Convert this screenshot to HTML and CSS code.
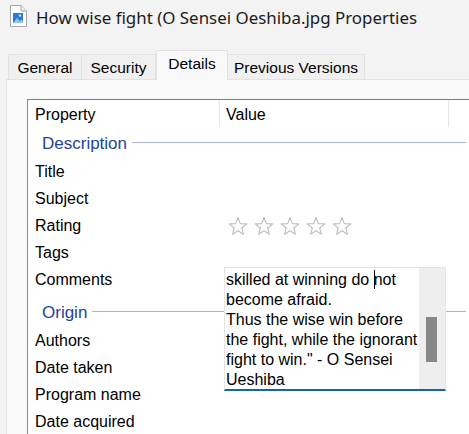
FILE: index.html
```html
<!DOCTYPE html>
<html>
<head>
<meta charset="utf-8">
<link rel="stylesheet" href="styles.css">
</head>
<body>
<div class="window">
  <div class="titlebar">
    <svg class="file-icon" width="18" height="22" viewBox="0 0 18 22">
      <path d="M1.5 0.5 H12 L17.5 6 V21.5 H1.5 Z" fill="#fff" stroke="#a3a8b0"/>
      <path d="M12 0.5 V6 H17.5" fill="#eef0f3" stroke="#a3a8b0"/>
      <rect x="4" y="8" width="10" height="10" fill="#2a79d6"/>
      <path d="M4 18 L8 13 L11 16 L12.5 14.5 L14 16 V18 Z" fill="#8cc3f5"/>
      <circle cx="11" cy="10.5" r="1.2" fill="#cfe6fb"/>
    </svg>
    <span class="title">How wise fight (O Sensei Oeshiba.jpg Properties</span>
  </div>
  <div class="tabs">
    <div class="tab tab-general">General</div>
    <div class="tab tab-security">Security</div>
    <div class="tab tab-details active">Details</div>
    <div class="tab tab-prev">Previous Versions</div>
  </div>
  <div class="panel">
    <div class="list">
      <div class="header">
        <div class="hcell col-prop">Property</div>
        <div class="hcell col-val">Value</div>
      </div>
      <div class="group"><span class="group-name">Description</span><span class="rule"></span></div>
      <div class="row"><span class="label">Title</span></div>
      <div class="row"><span class="label">Subject</span></div>
      <div class="row"><span class="label">Rating</span>
        <span class="stars">
          <svg viewBox="0 0 20 20" class="star"><path d="M10 1.5 L12.3 7.6 L18.8 7.9 L13.7 12 L15.4 18.3 L10 14.7 L4.6 18.3 L6.3 12 L1.2 7.9 L7.7 7.6 Z"/></svg>
          <svg viewBox="0 0 20 20" class="star"><path d="M10 1.5 L12.3 7.6 L18.8 7.9 L13.7 12 L15.4 18.3 L10 14.7 L4.6 18.3 L6.3 12 L1.2 7.9 L7.7 7.6 Z"/></svg>
          <svg viewBox="0 0 20 20" class="star"><path d="M10 1.5 L12.3 7.6 L18.8 7.9 L13.7 12 L15.4 18.3 L10 14.7 L4.6 18.3 L6.3 12 L1.2 7.9 L7.7 7.6 Z"/></svg>
          <svg viewBox="0 0 20 20" class="star"><path d="M10 1.5 L12.3 7.6 L18.8 7.9 L13.7 12 L15.4 18.3 L10 14.7 L4.6 18.3 L6.3 12 L1.2 7.9 L7.7 7.6 Z"/></svg>
          <svg viewBox="0 0 20 20" class="star"><path d="M10 1.5 L12.3 7.6 L18.8 7.9 L13.7 12 L15.4 18.3 L10 14.7 L4.6 18.3 L6.3 12 L1.2 7.9 L7.7 7.6 Z"/></svg>
        </span>
      </div>
      <div class="row"><span class="label">Tags</span></div>
      <div class="row"><span class="label">Comments</span></div>
      <div class="group group-origin"><span class="group-name">Origin</span><span class="rule"></span></div>
      <div class="row"><span class="label">Authors</span></div>
      <div class="row"><span class="label">Date taken</span></div>
      <div class="row"><span class="label">Program name</span></div>
      <div class="row"><span class="label">Date acquired</span></div>

      <div class="editbox">
        <div class="edit-text">skilled at winning do <span class="caret"></span>not<br>become afraid.<br>Thus the wise win before<br>the fight, while the ignorant<br>fight to win." - O Sensei<br>Ueshiba</div>
        <div class="scrollbar"><div class="thumb"></div></div>
      </div>
    </div>
  </div>
</div>
</body>
</html>
```

FILE: styles.css
```css
html, body {
  margin: 0;
  padding: 0;
}
body {
  width: 469px;
  height: 434px;
  overflow: hidden;
  background: #f3f3f3;
  font-family: "Liberation Sans", Arial, sans-serif;
  color: #000;
}
.window {
  display: flex;
  flex-direction: column;
  height: 434px;
}
.titlebar {
  flex: none;
  height: 34px;
  display: flex;
  align-items: center;
  padding-left: 9px;
  gap: 9px;
}
.file-icon {
  flex: none;
  margin-top: -2px;
}
.title {
  font-family: "Noto Sans", "Open Sans", sans-serif;
  font-size: 16.9px;
  color: #1b1b1b;
  white-space: nowrap;
}
.tabs {
  flex: none;
  display: flex;
  align-items: flex-end;
  padding-top: 16px;
  padding-left: 8px;
  height: 29px;
  position: relative;
  z-index: 1;
}
.tab {
  box-sizing: border-box;
  height: 25px;
  background: #f0f0f0;
  border: 1px solid #e2e2e2;
  border-bottom: none;
  font-size: 15.5px;
  display: flex;
  align-items: center;
  justify-content: center;
  padding-top: 1px;
  white-space: nowrap;
}
.tab + .tab {
  border-left: none;
}
.tab-general { width: 74px; }
.tab-security { width: 74px; }
.tab-details { width: 72px; }
.tab-prev { width: 137px; }
.tab.active {
  height: 30px;
  margin-bottom: -1px;
  background: #f9f9f9;
  border-left: 1px solid #e2e2e2;
  padding-bottom: 4px;
}
.tab.active + .tab {
  border-left: none;
}
.panel {
  flex: 1;
  min-height: 0;
  overflow: hidden;
  margin-left: 6px;
  background: #f9f9f9;
  border-top: 1px solid #e2e2e2;
  border-left: 1px solid #e6e6e6;
  padding: 19px 0 0 20px;
  display: flex;
}
.list {
  flex: 1;
  position: relative;
  background: #fff;
  border-top: 1px solid #7f7f7f;
  border-left: 1px solid #8a8a8a;
  font-size: 16px;
}
.header {
  display: flex;
  height: 28px;
}
.hcell {
  display: flex;
  align-items: center;
  height: 27px;
  box-sizing: border-box;
  padding-top: 2px;
}
.col-prop {
  width: 192px;
  padding-left: 7px;
  border-right: 1px solid #e5e5e5;
}
.col-val {
  width: 229px;
  padding-left: 6px;
  border-right: 1px solid #e5e5e5;
}
.group {
  display: flex;
  align-items: center;
  height: 29px;
  box-sizing: border-box;
  padding-top: 2px;
  padding-left: 14px;
}
.group-origin {
  height: 34px;
  padding-top: 7px;
}
.group-name {
  color: #22449c;
  font-size: 17px;
}
.rule {
  flex: 1;
  height: 1px;
  background: #aab3d3;
  margin-left: 5px;
  margin-right: 3px;
  margin-top: -2px;
}
.row {
  display: flex;
  align-items: center;
  height: 27px;
  box-sizing: border-box;
  padding-top: 2px;
}
.label {
  width: 193px;
  padding-left: 7px;
  box-sizing: border-box;
  flex: none;
}
.stars {
  display: flex;
  gap: 6px;
  margin-left: 7px;
}
.star {
  width: 20px;
  height: 20px;
  fill: none;
  stroke: #bdbdbd;
  stroke-width: 1.1;
  stroke-linejoin: round;
}
.editbox {
  position: absolute;
  left: 196px;
  top: 167px;
  width: 222px;
  height: 124px;
  box-sizing: border-box;
  background: #fff;
  border: 1px solid #e3e3e3;
  border-bottom: 2px solid #1565a8;
  display: flex;
}
.edit-text {
  flex: 1;
  padding: 2px 0 0 1px;
  line-height: 20px;
  font-size: 16px;
  white-space: nowrap;
  overflow: hidden;
}
.caret {
  display: inline-block;
  width: 1px;
  height: 19px;
  background: #000;
  vertical-align: -4px;
  margin-right: -1px;
}
.scrollbar {
  width: 26px;
  flex: none;
  background: #eeeeee;
}
.thumb {
  width: 11px;
  height: 45px;
  margin-top: 49px;
  margin-left: 7px;
  background: #888888;
}
```
